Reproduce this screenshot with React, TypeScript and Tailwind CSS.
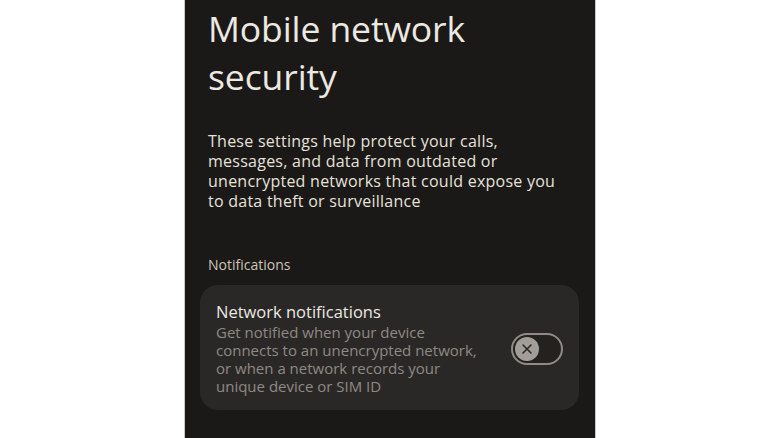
import React from "react";

export default function App() {
  return (
    <div className="w-[780px] h-[438px] bg-white flex justify-center overflow-hidden" style={{ fontFamily: '"Open Sans", sans-serif' }}>
      <div className="w-[412px] h-full bg-[#1b1917] border-x border-[#c9c9c9] flex flex-col pl-[23px] pr-[16px]">
        <h1 className="text-[35.5px] leading-[48px] text-[#ece8e2] font-normal mt-[4px] tracking-[-0.1px]">
          Mobile network
          <br />
          security
        </h1>
        <p className="mt-[31px] text-[16px] leading-[20px] text-[#e6e1da] tracking-[0.25px]">
          These settings help protect your calls,
          <br />
          messages, and data from outdated or
          <br />
          unencrypted networks that could expose you
          <br />
          to data theft or surveillance
        </p>
        <div className="mt-[44px] text-[14px] leading-[20px] text-[#cbc3b8]">Notifications</div>
        <div className="mt-[10px] -ml-[8px] rounded-[18px] bg-[#2a2826] pl-[16px] pr-[16px] pt-[16px] pb-[15px] flex items-center">
          <div className="flex-1">
            <div className="text-[16.5px] leading-[22px] text-[#ece8e2]">Network notifications</div>
            <div className="text-[15px] leading-[18px] text-[#8e8984] w-[268px]">
              Get notified when your device connects to an unencrypted network, or when a network records your unique device or SIM ID
            </div>
          </div>
          <div className="w-[52px] h-[32px] rounded-full border-2 border-[#8f8b86] bg-[#24221f] flex items-center pl-[2px] mt-[1px]">
            <div className="w-[24px] h-[24px] rounded-full bg-[#a29d97] flex items-center justify-center">
              <svg width="12" height="12" viewBox="0 0 12 12">
                <path d="M2 2L10 10M10 2L2 10" stroke="#2a2826" strokeWidth="1.6" strokeLinecap="round" />
              </svg>
            </div>
          </div>
        </div>
      </div>
    </div>
  );
}
